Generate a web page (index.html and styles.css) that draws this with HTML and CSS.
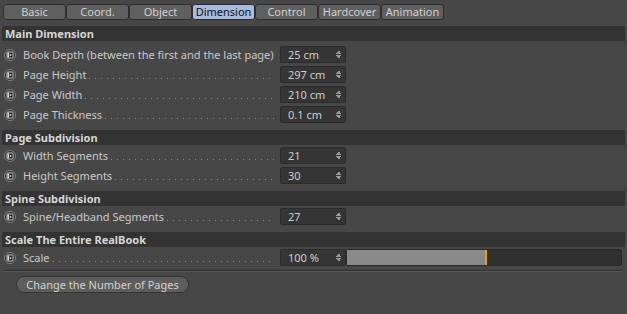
FILE: index.html
```html
<!DOCTYPE html>
<html lang="en">

<head>
    <meta name="viewport" content="width=device-width, initial-scale=1.0" />
    <title>RealBook - Dimension</title>
    <link rel="stylesheet" href="styles.css">
</head>

<body>
    <div class="tabs">
        <div class="tab">Basic</div>
        <div class="tab">Coord.</div>
        <div class="tab">Object</div>
        <div class="tab active">Dimension</div>
        <div class="tab">Control</div>
        <div class="tab">Hardcover</div>
        <div class="tab">Animation</div>
    </div>

    <div class="group">
        <div class="group-title">Main Dimension</div>
        <div class="rows first">
            <div class="row">
                <span class="key"><svg width="12" height="12" viewBox="0 0 12 12"><circle cx="6" cy="6" r="5.5" fill="#2f2f2f" stroke="#858585" stroke-width="1"/><rect x="3" y="3" width="6" height="6" rx="1" fill="#111" stroke="#d0d0d0" stroke-width="1"/><rect x="3.5" y="3.5" width="1.6" height="5" fill="#d8d8d8"/><path d="M5.8 4.4 L8 6 L5.8 7.6 Z" fill="#d8d8d8"/></svg></span>
                <span class="label"><span class="text">Book Depth (between the first and the last page)</span><span class="leader"></span></span>
                <span class="field">25 cm<span class="spin"></span></span>
            </div>
            <div class="row">
                <span class="key"><svg width="12" height="12" viewBox="0 0 12 12"><circle cx="6" cy="6" r="5.5" fill="#2f2f2f" stroke="#858585" stroke-width="1"/><rect x="3" y="3" width="6" height="6" rx="1" fill="#111" stroke="#d0d0d0" stroke-width="1"/><rect x="3.5" y="3.5" width="1.6" height="5" fill="#d8d8d8"/><path d="M5.8 4.4 L8 6 L5.8 7.6 Z" fill="#d8d8d8"/></svg></span>
                <span class="label"><span class="text">Page Height</span><span class="leader"></span></span>
                <span class="field">297 cm<span class="spin"></span></span>
            </div>
            <div class="row">
                <span class="key"><svg width="12" height="12" viewBox="0 0 12 12"><circle cx="6" cy="6" r="5.5" fill="#2f2f2f" stroke="#858585" stroke-width="1"/><rect x="3" y="3" width="6" height="6" rx="1" fill="#111" stroke="#d0d0d0" stroke-width="1"/><rect x="3.5" y="3.5" width="1.6" height="5" fill="#d8d8d8"/><path d="M5.8 4.4 L8 6 L5.8 7.6 Z" fill="#d8d8d8"/></svg></span>
                <span class="label"><span class="text">Page Width</span><span class="leader"></span></span>
                <span class="field">210 cm<span class="spin"></span></span>
            </div>
            <div class="row">
                <span class="key"><svg width="12" height="12" viewBox="0 0 12 12"><circle cx="6" cy="6" r="5.5" fill="#2f2f2f" stroke="#858585" stroke-width="1"/><rect x="3" y="3" width="6" height="6" rx="1" fill="#111" stroke="#d0d0d0" stroke-width="1"/><rect x="3.5" y="3.5" width="1.6" height="5" fill="#d8d8d8"/><path d="M5.8 4.4 L8 6 L5.8 7.6 Z" fill="#d8d8d8"/></svg></span>
                <span class="label"><span class="text">Page Thickness</span><span class="leader"></span></span>
                <span class="field">0.1 cm<span class="spin"></span></span>
            </div>
        </div>
    </div>

    <div class="group">
        <div class="group-title">Page Subdivision</div>
        <div class="rows">
            <div class="row">
                <span class="key"><svg width="12" height="12" viewBox="0 0 12 12"><circle cx="6" cy="6" r="5.5" fill="#2f2f2f" stroke="#858585" stroke-width="1"/><rect x="3" y="3" width="6" height="6" rx="1" fill="#111" stroke="#d0d0d0" stroke-width="1"/><rect x="3.5" y="3.5" width="1.6" height="5" fill="#d8d8d8"/><path d="M5.8 4.4 L8 6 L5.8 7.6 Z" fill="#d8d8d8"/></svg></span>
                <span class="label"><span class="text">Width Segments</span><span class="leader"></span></span>
                <span class="field">21<span class="spin"></span></span>
            </div>
            <div class="row">
                <span class="key"><svg width="12" height="12" viewBox="0 0 12 12"><circle cx="6" cy="6" r="5.5" fill="#2f2f2f" stroke="#858585" stroke-width="1"/><rect x="3" y="3" width="6" height="6" rx="1" fill="#111" stroke="#d0d0d0" stroke-width="1"/><rect x="3.5" y="3.5" width="1.6" height="5" fill="#d8d8d8"/><path d="M5.8 4.4 L8 6 L5.8 7.6 Z" fill="#d8d8d8"/></svg></span>
                <span class="label"><span class="text">Height Segments</span><span class="leader"></span></span>
                <span class="field">30<span class="spin"></span></span>
            </div>
        </div>
    </div>

    <div class="group">
        <div class="group-title">Spine Subdivision</div>
        <div class="rows">
            <div class="row">
                <span class="key"><svg width="12" height="12" viewBox="0 0 12 12"><circle cx="6" cy="6" r="5.5" fill="#2f2f2f" stroke="#858585" stroke-width="1"/><rect x="3" y="3" width="6" height="6" rx="1" fill="#111" stroke="#d0d0d0" stroke-width="1"/><rect x="3.5" y="3.5" width="1.6" height="5" fill="#d8d8d8"/><path d="M5.8 4.4 L8 6 L5.8 7.6 Z" fill="#d8d8d8"/></svg></span>
                <span class="label"><span class="text">Spine/Headband Segments</span><span class="leader"></span></span>
                <span class="field">27<span class="spin"></span></span>
            </div>
        </div>
    </div>

    <div class="group">
        <div class="group-title">Scale The Entire RealBook</div>
        <div class="rows last">
            <div class="row">
                <span class="key"><svg width="12" height="12" viewBox="0 0 12 12"><circle cx="6" cy="6" r="5.5" fill="#2f2f2f" stroke="#858585" stroke-width="1"/><rect x="3" y="3" width="6" height="6" rx="1" fill="#111" stroke="#d0d0d0" stroke-width="1"/><rect x="3.5" y="3.5" width="1.6" height="5" fill="#d8d8d8"/><path d="M5.8 4.4 L8 6 L5.8 7.6 Z" fill="#d8d8d8"/></svg></span>
                <span class="label"><span class="text">Scale</span><span class="leader"></span></span>
                <span class="field">100 %<span class="spin"></span></span>
                <span class="slider"><span class="slider-fill" style="width: 50.5%"></span></span>
            </div>
        </div>
    </div>

    <div class="separator"></div>

    <div class="actions">
        <button class="btn" type="button">Change the Number of Pages</button>
    </div>
</body>

</html>
```

FILE: styles.css
```css
body {
    margin: 0;
    background-color: #474747;
    font-family: "Noto Sans", Arial, sans-serif;
    font-size: 11px;
    color: #c9c9c9;
    width: 627px;
    height: 314px;
    overflow: hidden;
}

/* tab bar */
.tabs {
    display: flex;
    margin: 4px 0 0 3px;
    height: 16px;
}

.tab {
    width: 63px;
    box-sizing: border-box;
    height: 16px;
    line-height: 14px;
    text-align: center;
    background-color: #5f5f5f;
    border: 1px solid #2e2e2e;
    border-radius: 3px;
    color: #cfcfcf;
}

.tab.active {
    background-color: #a7badd;
    color: #111;
}

/* groups */
.group-title {
    margin: 6px 2px 0 2px;
    height: 15px;
    line-height: 15px;
    padding-left: 3px;
    background-color: #333333;
    font-weight: bold;
    color: #d6d6d6;
}

.group + .group .group-title {
    margin-top: 0;
}

.rows {
    padding: 1px 0 5px 0;
}

.rows.first {
    padding-top: 4px;
}

.rows.last {
    padding-bottom: 0;
}

.row {
    display: flex;
    align-items: flex-start;
    height: 20px;
    padding-left: 4px;
}

.key {
    width: 12px;
    height: 12px;
    margin: 4px 7px 0 0;
    display: flex;
}

.label {
    width: 253px;
    display: flex;
    height: 20px;
    line-height: 20px;
    overflow: hidden;
    white-space: nowrap;
}

.label .text {
    flex: none;
}

.leader {
    flex: 1;
    margin: 0 2px 0 3px;
    height: 14px;
    background-image: linear-gradient(to right, #8c8c8c 1px, transparent 1px);
    background-size: 6px 1px;
    background-repeat: repeat-x;
    background-position: left bottom;
}

.field {
    margin: 1px 0 0 4px;
    width: 66px;
    height: 17px;
    box-sizing: border-box;
    line-height: 15px;
    padding-left: 7px;
    background-color: #353535;
    border: 1px solid #2b2b2b;
    border-radius: 2px;
    color: #cdcdcd;
    position: relative;
}

.spin {
    position: absolute;
    right: 4px;
    top: 3px;
    width: 5px;
    height: 9px;
    background:
        linear-gradient(to bottom right, transparent 50%, #9a9a9a 50%) left top / 3px 4px no-repeat,
        linear-gradient(to bottom left, transparent 50%, #9a9a9a 50%) right top / 2px 4px no-repeat,
        linear-gradient(to top right, transparent 50%, #9a9a9a 50%) left bottom / 3px 4px no-repeat,
        linear-gradient(to top left, transparent 50%, #9a9a9a 50%) right bottom / 2px 4px no-repeat;
}

.slider {
    flex: 1;
    margin: 1px 5px 0 0;
    height: 17px;
    box-sizing: border-box;
    background-color: #303030;
    border: 1px solid #292929;
    border-radius: 2px;
    display: flex;
}

.slider-fill {
    background-color: #8a8a8a;
    border-right: 2px solid #e5a222;
}

.separator {
    margin: 2px 4px 0 3px;
    height: 1px;
    background-color: #2f2f2f;
    border-bottom: 1px solid #575757;
}

.actions {
    padding: 4px 0 0 16px;
}

.btn {
    width: 173px;
    height: 17px;
    padding: 0;
    font-family: "Noto Sans", Arial, sans-serif;
    font-size: 11px;
    color: #d2d2d2;
    background-color: #5d5d5d;
    border: 1px solid #353535;
    border-radius: 8px;
    line-height: 15px;
}
```
